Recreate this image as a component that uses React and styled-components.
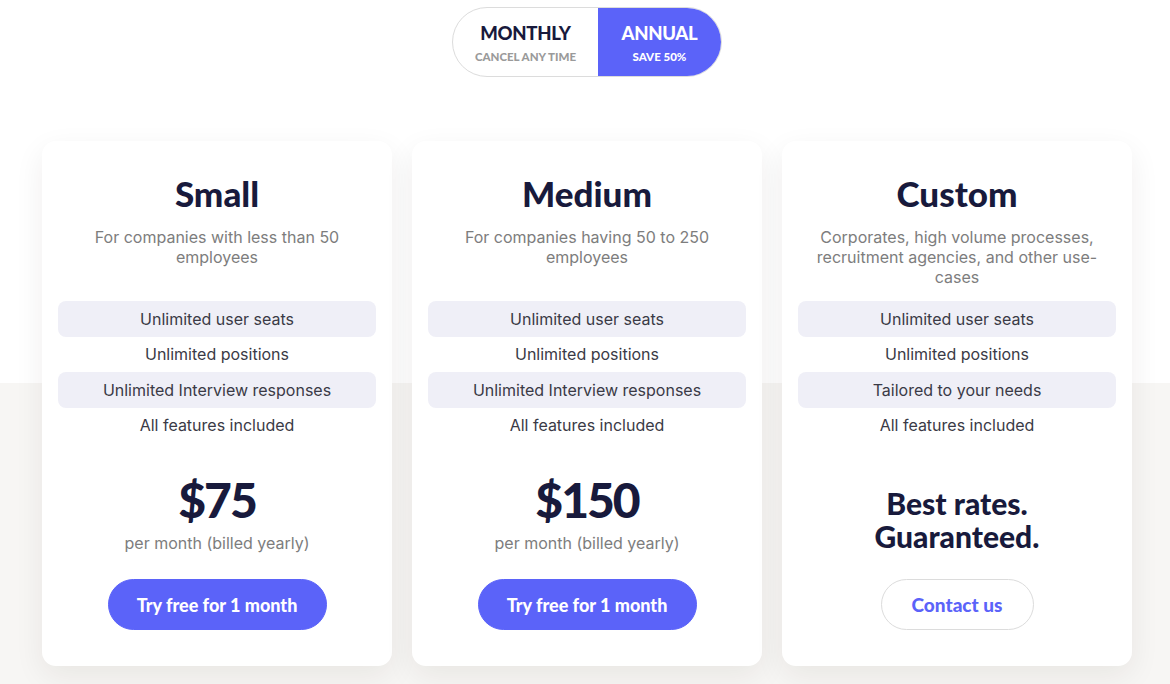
import React from "react";
import styled, { createGlobalStyle } from "styled-components";

const Global = createGlobalStyle`
  html, body {
    margin: 0;
    padding: 0;
  }
  body {
    font-family: Inter, "Open Sans", sans-serif;
    background: #fff;
  }
`;

const head = `"Lato", "Noto Sans", sans-serif`;

const Page = styled.div`
  min-height: 684px;
  padding-top: 7px;
  box-sizing: border-box;
  background: linear-gradient(to bottom, #fff 0, #fff 383px, #f7f6f4 383px);
`;

const Toggle = styled.div`
  display: flex;
  width: 270px;
  height: 70px;
  margin-left: 452px;
  box-sizing: border-box;
  border: 1px solid #dcdcdc;
  border-radius: 35px;
  overflow: hidden;
  background: #fff;
`;

const Option = styled.div`
  display: flex;
  flex-direction: column;
  align-items: center;
  justify-content: center;
  width: ${p => p.w}px;
  background: ${p => (p.active ? "#5b63f9" : "transparent")};
  color: ${p => (p.active ? "#fff" : "#181a3c")};
  font-family: ${head};
`;

const OptionTitle = styled.div`
  font-size: 18.5px;
  font-weight: 900;
  line-height: 24px;
  letter-spacing: -0.3px;
`;

const OptionSub = styled.div`
  font-size: 11.5px;
  font-weight: 900;
  line-height: 14px;
  margin-top: 5px;
  color: ${p => (p.active ? "#fff" : "#9a9a9a")};
`;

const Cards = styled.div`
  display: grid;
  grid-template-columns: repeat(3, 350px);
  gap: 20px;
  margin-top: 64px;
  padding-left: 42px;
`;

const Card = styled.div`
  display: flex;
  flex-direction: column;
  align-items: center;
  background: #fff;
  border-radius: 14px;
  padding: 32px 16px 36px;
  box-shadow: 0 10px 30px rgba(40, 30, 20, 0.07);
`;

const Title = styled.h2`
  margin: 0;
  font-family: ${head};
  font-size: 35px;
  font-weight: 900;
  line-height: 40px;
  color: #181a3c;
`;

const Desc = styled.p`
  margin: 14px 0 14px;
  max-width: 290px;
  min-height: 60px;
  font-size: 16px;
  line-height: 20px;
  color: #7d7d7d;
  text-align: center;
`;

const Features = styled.ul`
  list-style: none;
  margin: 0;
  padding: 0;
  width: 100%;
`;

const Feature = styled.li`
  display: flex;
  align-items: center;
  justify-content: center;
  height: 35.5px;
  border-radius: 8px;
  background: ${p => (p.shaded ? "#efeff7" : "transparent")};
  font-size: 16px;
  color: #3a3a46;
`;

const PriceArea = styled.div`
  display: flex;
  flex-direction: column;
  align-items: center;
  justify-content: flex-end;
  height: 110px;
`;

const Price = styled.div`
  font-family: ${head};
  font-size: 48px;
  font-weight: 900;
  line-height: 56px;
  color: #181a3c;
  letter-spacing: -2px;
`;

const PerMonth = styled.div`
  margin-top: 5px;
  font-size: 16px;
  line-height: 20px;
  color: #7d7d7d;
`;

const Slogan = styled.div`
  font-family: ${head};
  font-size: 30px;
  font-weight: 900;
  line-height: 33px;
  color: #181a3c;
  text-align: center;
`;

const Button = styled.button`
  margin-top: 26px;
  height: 51px;
  width: ${p => (p.outline ? 153 : 219)}px;
  border-radius: 26px;
  border: 1px solid ${p => (p.outline ? "#dcdcdc" : "#5b63f9")};
  background: ${p => (p.outline ? "#fff" : "#5b63f9")};
  color: ${p => (p.outline ? "#5b63f9" : "#fff")};
  font-family: ${head};
  font-size: ${p => (p.outline ? 19 : 18)}px;
  font-weight: 900;
  cursor: pointer;
`;

const plans = [
  {
    name: "Small",
    desc: "For companies with less than 50 employees",
    features: ["Unlimited user seats", "Unlimited positions", "Unlimited Interview responses", "All features included"],
    price: "$75",
  },
  {
    name: "Medium",
    desc: "For companies having 50 to 250 employees",
    features: ["Unlimited user seats", "Unlimited positions", "Unlimited Interview responses", "All features included"],
    price: "$150",
  },
  {
    name: "Custom",
    desc: "Corporates, high volume processes, recruitment agencies, and other use-cases",
    features: ["Unlimited user seats", "Unlimited positions", "Tailored to your needs", "All features included"],
  },
];

export default function App() {
  return (
    <Page>
      <Global />
      <Toggle>
        <Option w={146}>
          <OptionTitle>MONTHLY</OptionTitle>
          <OptionSub>CANCEL ANY TIME</OptionSub>
        </Option>
        <Option w={124} active>
          <OptionTitle>ANNUAL</OptionTitle>
          <OptionSub active>SAVE 50%</OptionSub>
        </Option>
      </Toggle>
      <Cards>
        {plans.map(plan => (
          <Card key={plan.name}>
            <Title>{plan.name}</Title>
            <Desc>{plan.desc}</Desc>
            <Features>
              {plan.features.map((f, i) => (
                <Feature key={f} shaded={i % 2 === 0}>{f}</Feature>
              ))}
            </Features>
            <PriceArea>
              {plan.price ? (
                <>
                  <Price>{plan.price}</Price>
                  <PerMonth>per month (billed yearly)</PerMonth>
                </>
              ) : (
                <Slogan>Best rates.<br />Guaranteed.</Slogan>
              )}
            </PriceArea>
            {plan.price ? <Button>Try free for 1 month</Button> : <Button outline>Contact us</Button>}
          </Card>
        ))}
      </Cards>
    </Page>
  );
}
